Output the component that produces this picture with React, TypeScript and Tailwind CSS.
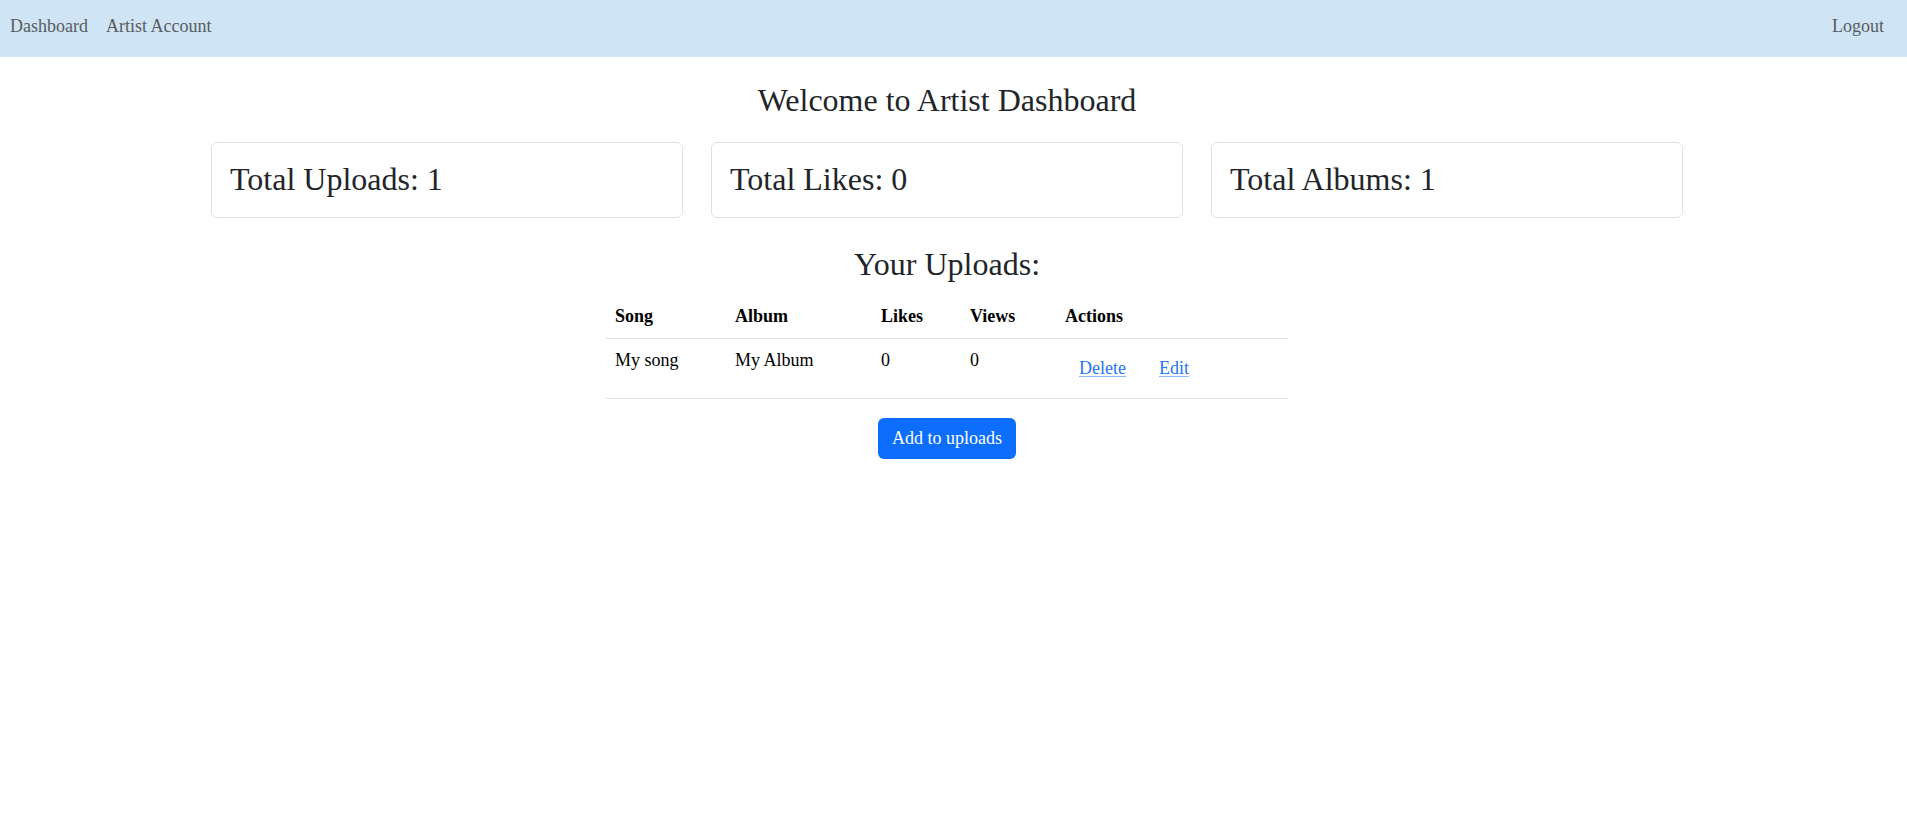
import React from 'react';

const stats = [
  { label: 'Total Uploads', value: 1 },
  { label: 'Total Likes', value: 0 },
  { label: 'Total Albums', value: 1 },
];

const uploads = [{ song: 'My song', album: 'My Album', likes: 0, views: 0 }];

export default function App() {
  return (
    <div className="min-h-screen bg-white text-[#212529] font-['Liberation_Serif',serif]">
      {/* Navbar */}
      <nav className="h-[57px] bg-[#cfe4f4] flex items-start justify-between pl-[10px] pr-[23px] pt-[13px] text-[18px] leading-[27px] text-[#595c5f]">
        <div className="flex gap-[18px]">
          <a href="#">Dashboard</a>
          <a href="#">Artist Account</a>
        </div>
        <a href="#">Logout</a>
      </nav>

      <main className="w-[1894px] flex flex-col items-center">
        <h2 className="mt-[24px] text-[32px] leading-[1.2]">Welcome to Artist Dashboard</h2>

        {/* Stats */}
        <div className="mt-[23px] w-[1472px] grid grid-cols-3 gap-[28px]">
          {stats.map((s) => (
            <div key={s.label} className="h-[76px] border border-[#dee2e6] rounded-md px-[18px] py-[17px]">
              <h3 className="text-[32px] leading-[1.2]">
                {s.label}: {s.value}
              </h3>
            </div>
          ))}
        </div>

        <h2 className="mt-[27px] text-[32px] leading-[1.2]">Your Uploads:</h2>

        {/* Uploads table */}
        <table className="mt-[11px] w-[682px] text-[18px] leading-[27px] text-black text-left border-collapse">
          <thead>
            <tr className="border-b border-[#dee2e6]">
              <th className="w-[120px] py-2 pl-[9px] pr-2 font-bold">Song</th>
              <th className="w-[146px] py-2 pl-[9px] pr-2 font-bold">Album</th>
              <th className="w-[89px] py-2 pl-[9px] pr-2 font-bold">Likes</th>
              <th className="w-[95px] py-2 pl-[9px] pr-2 font-bold">Views</th>
              <th className="py-2 pl-[9px] pr-2 font-bold">Actions</th>
            </tr>
          </thead>
          <tbody>
            {uploads.map((u) => (
              <tr key={u.song} className="border-b border-[#dee2e6] align-top">
                <td className="py-2 pl-[9px] pr-2">{u.song}</td>
                <td className="py-2 pl-[9px] pr-2">{u.album}</td>
                <td className="py-2 pl-[9px] pr-2">{u.likes}</td>
                <td className="py-2 pl-[9px] pr-2">{u.views}</td>
                <td className="pt-2 pb-[10px] pl-2 pr-2">
                  <div className="flex gap-[3px]">
                    <button className="px-[15px] pt-[8px] pb-[6px] text-[#1f74f7] underline decoration-[#8fbbfd] underline-offset-2">
                      Delete
                    </button>
                    <button className="px-[15px] pt-[8px] pb-[6px] text-[#1f74f7] underline decoration-[#8fbbfd] underline-offset-2">
                      Edit
                    </button>
                  </div>
                </td>
              </tr>
            ))}
          </tbody>
        </table>

        <button className="mt-[19px] h-[41px] px-[14px] rounded-md bg-[#0d6efd] text-white text-[18px] leading-[27px]">
          Add to uploads
        </button>
      </main>
    </div>
  );
}
